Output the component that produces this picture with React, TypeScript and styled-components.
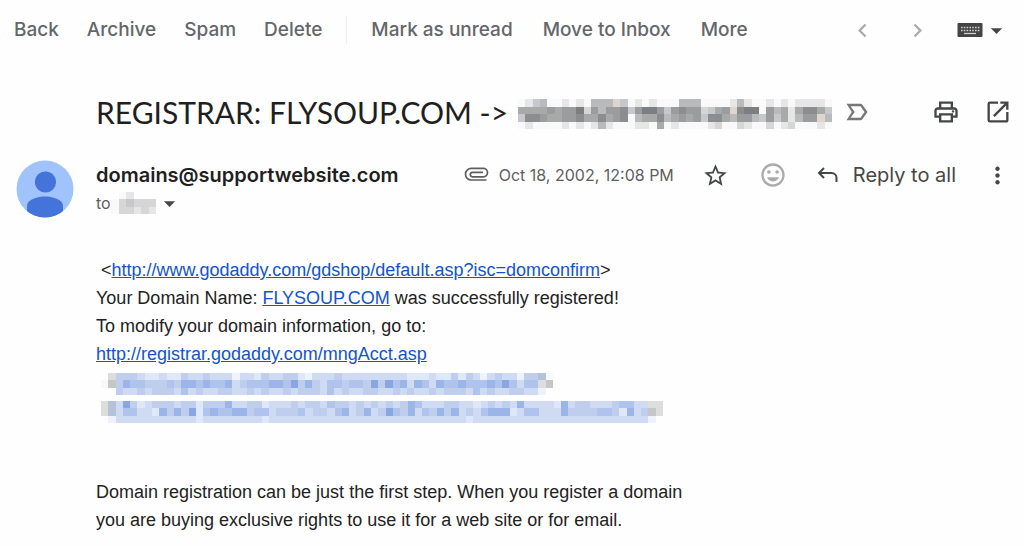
import React from 'react';
import styled, { createGlobalStyle } from 'styled-components';
import {
  MdArrowDropDown,
  MdChevronLeft,
  MdChevronRight,
  MdLabelImportantOutline,
  MdMoreVert,
  MdOpenInNew,
  MdOutlineInsertEmoticon,
  MdOutlinePrint,
  MdStarBorder,
} from 'react-icons/md';

const GlobalStyle = createGlobalStyle`
  * { box-sizing: border-box; }
  body {
    margin: 0;
    background: #fefefe;
    color: #222;
    font-family: Inter, "Liberation Sans", sans-serif;
  }
`;

const Page = styled.div`
  display: flex;
  flex-direction: column;
`;

const Toolbar = styled.nav`
  display: flex;
  align-items: center;
  height: 60px;
  padding: 0 14px;
`;

const Actions = styled.div<{ $divided?: boolean }>`
  display: flex;
  align-items: center;
  gap: ${(p) => (p.$divided ? 30 : 28)}px;
  height: 28px;
  padding-left: ${(p) => (p.$divided ? 24 : 0)}px;
  margin-left: ${(p) => (p.$divided ? 24 : 0)}px;
  border-left: ${(p) => (p.$divided ? '1px solid #ececec' : '0')};
`;

const PlainButton = styled.button`
  display: inline-flex;
  align-items: center;
  padding: 0;
  border: 0;
  background: none;
  color: inherit;
  font: inherit;
  white-space: nowrap;
  cursor: pointer;
`;

const ActionButton = styled(PlainButton)`
  color: #63676b;
  font-size: 19px;
  line-height: 24px;
  font-weight: 500;
`;

const IconButton = styled(PlainButton)<{ $tone?: string }>`
  justify-content: center;
  flex: none;
  color: ${(p) => p.$tone ?? '#444746'};
`;

const PageButton = styled(IconButton)`
  width: 30px;
`;

const Pager = styled.div`
  display: flex;
  align-items: center;
  gap: 25px;
  margin-left: auto;
`;

const Subject = styled.header`
  display: flex;
  align-items: center;
  height: 56px;
  margin-top: 24px;
  padding: 0 12px 0 96px;
`;

const Title = styled.h1`
  display: flex;
  align-items: center;
  gap: 10px;
  margin: 0;
  font-family: Lato, sans-serif;
  font-size: 30px;
  line-height: 38px;
  font-weight: 400;
  color: #1f1f1f;
  white-space: nowrap;
`;

const HiddenAddress = styled.span`
  padding-top: 4px;
`;

const LabelSlot = styled.div`
  display: flex;
  margin-left: 11px;
`;

const SubjectTools = styled.div`
  display: flex;
  gap: 24px;
  margin-left: auto;
`;

const Sender = styled.section`
  display: grid;
  grid-template-columns: 80px 1fr;
  align-items: center;
  height: 64px;
  margin-top: 17px;
  padding: 0 13px 0 16px;
`;

const SenderRows = styled.div`
  display: flex;
  flex-direction: column;
`;

const SenderLine = styled.div`
  display: flex;
  align-items: center;
  height: 28px;
`;

const From = styled.strong`
  font-size: 20px;
  line-height: 28px;
  font-weight: 600;
  color: #1f1f1f;
`;

const Meta = styled.div`
  display: flex;
  align-items: center;
  gap: 10px;
  margin-left: auto;
  color: #5e5e5e;
  font-size: 16px;
  white-space: nowrap;
`;

const MessageTools = styled.div`
  display: flex;
  align-items: center;
  gap: 30px;
  margin-left: 28px;
`;

const ReplyButton = styled(PlainButton)`
  gap: 15px;
  color: #444746;
  font-size: 20px;
  line-height: 28px;
`;

const Recipient = styled.div`
  display: flex;
  align-items: center;
  height: 28px;
  color: #5e5e5e;
  font-size: 16px;
`;

const Body = styled.main`
  display: flex;
  flex-direction: column;
  gap: 54px;
  padding: 35px 24px 12px 96px;
  font-family: "Liberation Sans", Arial, sans-serif;
  font-size: 18px;
  line-height: 28px;
`;

const Paragraph = styled.p`
  margin: 0;
`;

const Link = styled.a`
  color: #1155cc;
`;

const HiddenLine = styled.span`
  display: flex;
  align-items: center;
  height: 28px;
  padding: 3px 0 0 5px;
`;

const TONES: Record<string, string> = {
  a: '#edf2fc', b: '#dfe8f8', c: '#cfdbf3', d: '#bfceed', e: '#afc3ec', f: '#9bb5e8', g: '#87a6e2',
  w: '#f8f8f8', x: '#dddddd', y: '#c6c6c6', z: '#b6c2da',
  '7': '#7b7e83', '8': '#8c8d8f', '9': '#9b9c9e', A: '#a8a9a9', B: '#b9babb', C: '#c5c8cc',
  D: '#d6d6d6', E: '#e6e6e6', F: '#f9f9f9', P: '#dfd5cc',
};

const MosaicSvg = styled.svg`
  display: block;
  flex: none;
`;

function Mosaic({ rows, width, height, label }: { rows: string[]; width: number; height: number; label: string }) {
  return (
    <MosaicSvg
      role="img"
      aria-label={label}
      width={width}
      height={height}
      viewBox={`0 0 ${rows[0].length} ${rows.length}`}
      preserveAspectRatio="none"
      shapeRendering="crispEdges"
    >
      {rows.flatMap((row, y) =>
        [...row].map((tone, x) =>
          TONES[tone] ? <rect key={`${x}-${y}`} x={x} y={y} width="1" height="1" fill={TONES[tone]} /> : null,
        ),
      )}
    </MosaicSvg>
  );
}

const ADDRESS = [
  'FECBFFEFEFBBBPCFEFEFFFBBBFFFFEBEFFEFEFEEEEF',
  'AAAA9A997D9B998C9779C9899DCA9P877F9BAEA88AC',
  'C889AA998AA8A98FBAA8BA9A9C88AB99BC9CAEB99PB',
  'FEFFFFEFEFEBEFFFEEFAFEFFFFEDFFDEFFDFEDFFFEF',
];
const NAME = [' FE   ', 'FDCDDD', 'FDDEDE'];
const FIRST_LINK = [
  ' xdddcbbcbbdccdcccaccbdccddbacccdccccccccc'.concat('bbbcbbdbdcacdccaddzw'),
  'wydfeedddedffefeefcdeeeffegdfdceedeedgdgefcfecfeefeeefegeceexy',
  '  '.concat('dccdcdddcecdccddccdc'.repeat(3).slice(0, 58), 'a '),
];
const SECOND_LINK = [
  'xzcgdbcdddcddbdddfccddbcccdcddceddcdcdcdcdfecccddccbcdcdcfccccbfcddcccdeeccxx',
  'xzceeccbfdfdgbefeeffdeecdddecddcefcdfcdgedfcedfdfcdcefffbceecccfddddeedbfcdyx',
  ' a'.concat('c'.repeat(11), 'b', 'c'.repeat(8), 'b', 'c'.repeat(27), 'b', 'c'.repeat(24), 'a '),
];

const Avatar = () => (
  <svg width="58" height="58" viewBox="0 0 58 58" role="img" aria-label="Sender">
    <defs>
      <clipPath id="face">
        <circle cx="29" cy="29" r="28.5" />
      </clipPath>
    </defs>
    <circle cx="29" cy="29" r="28.5" fill="#a0c3fc" />
    <g clipPath="url(#face)" fill="#4474d9">
      <circle cx="29.500" cy="22" r="10.6" />
      <path d="M11 58V46c0-7 11-9.500 18-9.500S47 39 47 46v12z" />
    </g>
  </svg>
);

const Keyboard = () => (
  <svg width="26" height="16" viewBox="0 0 26 16" aria-hidden="true">
    <rect x="0.500" y="1" width="25" height="14" rx="1" fill="#444" />
    <path d="M4 5.500h19M4 8.500h19" stroke="#d0d0d0" strokeWidth="1.600" strokeDasharray="1.600 1.200" />
    <path d="M7 11.500h12" stroke="#d0d0d0" strokeWidth="1.300" />
  </svg>
);

const Paperclip = () => (
  <svg width="25" height="16" viewBox="0 0 25 16" fill="none" stroke="#5e5e5e" strokeWidth="1.700" aria-hidden="true">
    <path d="M22.500 13H7.300A5.800 5.800 0 0 1 7.300 1.400H19.300a4.200 4.200 0 0 1 0 8.400H8.500a2.200 2.200 0 0 1 0-4.400H19" />
  </svg>
);

const ReplyArrow = () => (
  <svg width="21" height="18" viewBox="0 0 21 18" fill="none" stroke="#444746" strokeWidth="2" aria-hidden="true">
    <path d="M7 2 2 7l5 5M2 7h12.500a5 5 0 0 1 5 5v4" />
  </svg>
);

export default function App() {
  return (
    <Page>
      <GlobalStyle />
      <Toolbar aria-label="Message actions">
        <Actions>
          {['Back', 'Archive', 'Spam', 'Delete'].map((name) => (
            <ActionButton key={name}>{name}</ActionButton>
          ))}
        </Actions>
        <Actions $divided>
          {['Mark as unread', 'Move to Inbox', 'More'].map((name) => (
            <ActionButton key={name}>{name}</ActionButton>
          ))}
        </Actions>
        <Pager>
          <PageButton $tone="#aaa" aria-label="Newer"><MdChevronLeft size={27} /></PageButton>
          <PageButton $tone="#aaa" aria-label="Older"><MdChevronRight size={27} /></PageButton>
          <IconButton aria-label="Input tools"><Keyboard /><MdArrowDropDown size={27} /></IconButton>
        </Pager>
      </Toolbar>

      <Subject>
        <Title>
          REGISTRAR: FLYSOUP.COM -&gt;
          <HiddenAddress>
            <Mosaic rows={ADDRESS} width={314} height={30} label="Hidden address" />
          </HiddenAddress>
        </Title>
        <LabelSlot>
          <IconButton $tone="#777" aria-label="Mark as important"><MdLabelImportantOutline size={28} /></IconButton>
        </LabelSlot>
        <SubjectTools>
          <IconButton aria-label="Print"><MdOutlinePrint size={28} /></IconButton>
          <IconButton aria-label="Open in new window"><MdOpenInNew size={28} /></IconButton>
        </SubjectTools>
      </Subject>

      <Sender>
        <Avatar />
        <SenderRows>
          <SenderLine>
            <From>domains@supportwebsite.com</From>
            <Meta>
              <Paperclip />
              <time dateTime="2002-10-18T12:08">Oct 18, 2002, 12:08 PM</time>
            </Meta>
            <MessageTools>
              <IconButton aria-label="Star"><MdStarBorder size={27} /></IconButton>
              <IconButton $tone="#aaa" aria-label="Add reaction"><MdOutlineInsertEmoticon size={28} /></IconButton>
              <ReplyButton><ReplyArrow />Reply to all</ReplyButton>
            </MessageTools>
            <MessageTools>
              <IconButton aria-label="More options"><MdMoreVert size={27} /></IconButton>
            </MessageTools>
          </SenderLine>
          <Recipient>
            to
            <Mosaic rows={NAME} width={45} height={22} label="Hidden name" />
            <IconButton aria-label="Show details"><MdArrowDropDown size={27} /></IconButton>
          </Recipient>
        </SenderRows>
      </Sender>

      <Body>
        <Paragraph>
          &nbsp;&lt;<Link href="#shop">http://www.godaddy.com/gdshop/default.asp?isc=domconfirm</Link>&gt;
          <br />
          Your Domain Name: <Link href="#domain">FLYSOUP.COM</Link> was successfully registered!
          <br />
          To modify your domain information, go to:
          <br />
          <Link href="#account">http://registrar.godaddy.com/mngAcct.asp</Link>
          <HiddenLine><Mosaic rows={FIRST_LINK} width={452} height={22} label="Hidden link" /></HiddenLine>
          <HiddenLine><Mosaic rows={SECOND_LINK} width={562} height={22} label="Hidden link" /></HiddenLine>
        </Paragraph>
        <Paragraph>
          Domain registration can be just the first step. When you register a domain
          <br />
          you are buying exclusive rights to use it for a web site or for email.
        </Paragraph>
      </Body>
    </Page>
  );
}
